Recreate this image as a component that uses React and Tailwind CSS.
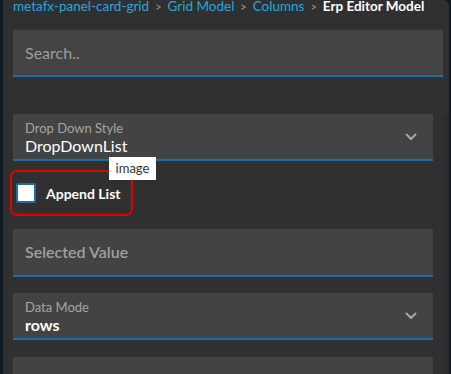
import React from "react";

const Chevron = () => (
  <svg width="12" height="8" viewBox="0 0 12 8" fill="none" className="shrink-0">
    <path d="M1.5 1.5L6 6L10.5 1.5" stroke="#a8a8a8" strokeWidth="2" strokeLinecap="round" strokeLinejoin="round" />
  </svg>
);

const SelectField = ({ label, value, bold }) => (
  <div className="shrink-0 h-[47px] bg-[#434343] border-b-2 border-[#1c6ea4] flex items-center pl-[12px] pr-[16px]">
    <div className="flex-1 flex flex-col pt-[2px]">
      <span className="text-[13px] leading-[16px] text-[#a3a3a3]">{label}</span>
      <span className={`text-[16px] leading-[20px] text-white ${bold ? "font-bold" : ""}`}>{value}</span>
    </div>
    <Chevron />
  </div>
);

export default function App() {
  return (
    <div
      className="w-[451px] h-[374px] bg-[#0e1b24] flex overflow-hidden"
      style={{ fontFamily: "Lato, 'Open Sans', sans-serif" }}
    >
      <div className="relative ml-[3px] mr-[2px] flex-1 bg-[#303030] rounded-tr-[6px] flex flex-col overflow-hidden">
        {/* breadcrumb */}
        <div className="shrink-0 h-[31px] pl-[10px] flex items-start gap-[6px] whitespace-nowrap text-[13.5px] leading-[15px] -mt-[1px]">
          <span className="text-[#27a6df]">metafx-panel-card-grid</span>
          <span className="text-[#9a9a9a] text-[11px]">&gt;</span>
          <span className="text-[#27a6df]">Grid Model</span>
          <span className="text-[#9a9a9a] text-[11px]">&gt;</span>
          <span className="text-[#27a6df]">Columns</span>
          <span className="text-[#9a9a9a] text-[11px]">&gt;</span>
          <span className="text-white font-bold">Erp Editor Model</span>
        </div>

        {/* search */}
        <div className="shrink-0 ml-[10px] mr-[6px] h-[47px] bg-[#444444] border-b-2 border-[#1c6ea4] flex items-center pl-[12px]">
          <span className="text-[16px] text-[#9d9d9d]">Search..</span>
        </div>

        {/* scroll area */}
        <div className="flex flex-1 mt-[37px] min-h-0">
          <div className="flex-1 pl-[10px] pr-[10px] flex flex-col">
            <SelectField label="Drop Down Style" value="DropDownList" />

            <div className="shrink-0 mt-[9px] ml-[-3px] w-[123px] h-[46px] border-2 border-[#e50000] rounded-[7px] flex items-center pl-[4px] gap-[10px]">
              <div className="w-[20px] h-[20px] bg-white border-2 border-[#1e6ea6] rounded-[2px]" />
              <span className="text-[14px] font-bold text-white">Append List</span>
            </div>

            <div className="shrink-0 mt-[13px] h-[48px] bg-[#434343] border-b-2 border-[#1c6ea4] flex items-center pl-[12px]">
              <span className="text-[16px] font-semibold text-[#a0a0a0]">Selected Value</span>
            </div>

            <div className="shrink-0 mt-[16px]">
              <SelectField label="Data Mode" value="rows" bold />
            </div>

            <div className="shrink-0 mt-[17px] h-[47px] bg-[#434343]" />
          </div>
          <div className="w-[6px] bg-[#2c2c2c]" />
        </div>

        {/* tooltip */}
        <div className="absolute left-[106px] top-[157px] w-[47px] h-[23px] bg-white flex items-center justify-center">
          <span className="text-[13px] text-[#333333]">image</span>
        </div>
      </div>
    </div>
  );
}
